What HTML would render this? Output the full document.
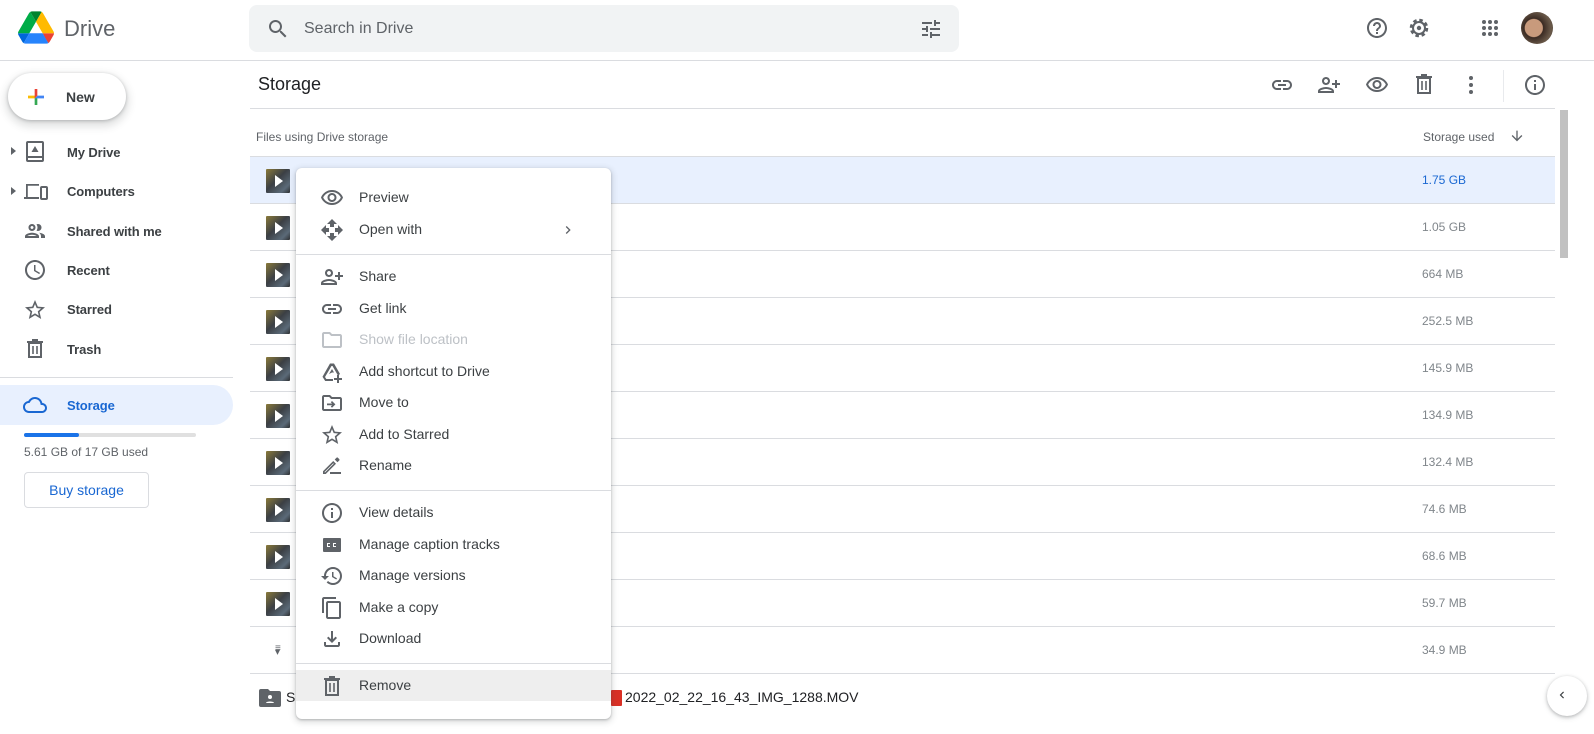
<!DOCTYPE html>
<html><head><meta charset="utf-8">
<style>
*{margin:0;padding:0;box-sizing:border-box}
body{width:1594px;height:734px;overflow:hidden;background:#fff;font-family:"Liberation Sans",Arial,sans-serif;color:#3c4043;position:relative}
.a{position:absolute}
svg{display:block}
.ic{position:absolute;fill:#5f6368}
.nav{position:absolute;left:67px;font-size:13px;color:#3c4043;font-weight:bold;letter-spacing:-0.1px}
.row{position:absolute;left:250px;width:1305px;height:47px;border-bottom:1px solid #dadce0}
.row .sz{position:absolute;left:1172px;top:16px;font-size:12px;color:#80868b}
.thumb{position:absolute;left:16px;top:12px;width:24px;height:24px;background:linear-gradient(135deg,#8a7a3a,#3b3f44 45%,#5b6a78 80%,#2d2f31);border-radius:1px}
.thumb:after{content:"";position:absolute;left:9px;top:6px;border-left:8px solid #fff;border-top:6px solid transparent;border-bottom:6px solid transparent}
.menu{position:absolute;left:296px;top:168px;width:315px;height:551px;background:#fff;border-radius:6px;box-shadow:0 2px 6px 2px rgba(60,64,67,.15),0 1px 2px rgba(60,64,67,.3)}
.mi{position:absolute;left:0;width:315px;height:31px;font-size:14px;color:#3c4043}
.mi span{position:absolute;left:63px;top:7px}
.mi svg{position:absolute;left:24px;top:4px;fill:#5f6368}
.sep{position:absolute;left:0;width:315px;height:1px;background:#dadce0}
</style></head><body>

<!-- header -->
<svg class="a" style="left:18px;top:11px" width="36" height="33" viewBox="0 0 87.3 78">
<path d="m6.6 66.85 3.85 6.65c.8 1.4 1.95 2.5 3.3 3.3l13.75-23.8h-27.5c0 1.55.4 3.1 1.2 4.5z" fill="#0066da"/>
<path d="m43.65 25-13.75-23.8c-1.35.8-2.5 1.9-3.3 3.3l-25.4 44a9.06 9.06 0 0 0-1.2 4.5h27.5z" fill="#00ac47"/>
<path d="m73.55 76.8c1.35-.8 2.5-1.9 3.3-3.3l1.6-2.75 7.65-13.25c.8-1.4 1.2-2.95 1.2-4.5h-27.502l5.852 11.5z" fill="#ea4335"/>
<path d="m43.65 25 13.75-23.8c-1.35-.8-2.9-1.2-4.5-1.2h-18.5c-1.6 0-3.15.45-4.5 1.2z" fill="#00832d"/>
<path d="m59.8 53h-32.3l-13.75 23.8c1.35.8 2.9 1.2 4.5 1.2h50.8c1.6 0 3.15-.45 4.5-1.2z" fill="#2684fc"/>
<path d="m73.4 26.5-12.7-22c-.8-1.4-1.95-2.5-3.3-3.3l-13.75 23.8 16.15 28h27.45c0-1.55-.4-3.1-1.2-4.5z" fill="#ffba00"/>
</svg>
<div class="a" style="left:64px;top:16px;font-size:22px;color:#5f6368">Drive</div>
<div class="a" style="left:249px;top:5px;width:710px;height:47px;background:#f1f3f4;border-radius:8px"></div>
<svg class="ic" style="left:266px;top:17px" width="24" height="24" viewBox="0 0 24 24"><path d="M15.5 14h-.79l-.28-.27C15.41 12.59 16 11.11 16 9.5 16 5.91 13.09 3 9.5 3S3 5.91 3 9.5 5.91 16 9.5 16c1.61 0 3.09-.59 4.23-1.57l.27.28v.79l5 4.99L20.49 19l-4.99-5zm-6 0C7.01 14 5 11.99 5 9.5S7.01 5 9.5 5 14 7.01 14 9.5 11.99 14 9.5 14z"/></svg>
<div class="a" style="left:304px;top:20px;font-size:16px;color:#5f6368">Search in Drive</div>
<svg class="ic" style="left:919px;top:17px" width="24" height="24" viewBox="0 0 24 24"><path d="M3 17v2h6v-2H3zM3 5v2h10V5H3zm10 16v-2h8v-2h-8v-2h-2v6h2zM7 9v2H3v2h4v2h2V9H7zm14 4v-2H11v2h10zm-6-4h2V7h4V5h-4V3h-2v6z"/></svg>
<svg class="ic" style="left:1365px;top:16px" width="24" height="24" viewBox="0 0 24 24"><path d="M11 18h2v-2h-2v2zm1-16C6.480 2 2 6.48 2 12s4.48 10 10 10 10-4.48 10-10S17.52 2 12 2zm0 18c-4.41 0-8-3.590-8-8s3.59-8 8-8 8 3.59 8 8-3.59 8-8 8zm0-14c-2.21 0-4 1.79-4 4h2c0-1.1.9-2 2-2s2 .9 2 2c0 2-3 1.75-3 5h2c0-2.25 3-2.5 3-5 0-2.21-1.79-4-4-4z"/></svg>
<svg class="a" style="left:1407px;top:16px" width="24" height="24" viewBox="0 0 24 24"><circle cx="12" cy="12" r="7.5" fill="none" stroke="#5f6368" stroke-width="3.5" stroke-dasharray="3.3 2.6"/><circle cx="12" cy="12" r="6" fill="none" stroke="#5f6368" stroke-width="2"/><circle cx="12" cy="12" r="2.2" fill="#5f6368"/></svg>
<svg class="a" style="left:1480px;top:18px" width="20" height="20" viewBox="0 0 20 20" fill="#5f6368"><circle cx="4" cy="4" r="2"/><circle cx="10" cy="4" r="2"/><circle cx="16" cy="4" r="2"/><circle cx="4" cy="10" r="2"/><circle cx="10" cy="10" r="2"/><circle cx="16" cy="10" r="2"/><circle cx="4" cy="16" r="2"/><circle cx="10" cy="16" r="2"/><circle cx="16" cy="16" r="2"/></svg>
<div class="a" style="left:1521px;top:12px;width:32px;height:32px;border-radius:50%;background:radial-gradient(circle at 40% 50%,#c89a7c 0 35%,#3a2a22 38%,#6b5a4a 70%,#2a2a2a)"></div>
<div class="a" style="left:0;top:60px;width:1594px;height:1px;background:#dadce0"></div>

<!-- sidebar -->
<div class="a" style="left:8px;top:73px;width:118px;height:47px;border-radius:24px;background:#fff;box-shadow:0 1px 3px rgba(60,64,67,.3),0 4px 8px 3px rgba(60,64,67,.15)"></div>
<svg class="a" style="left:24px;top:85px" width="24" height="24" viewBox="0 0 36 36"><path fill="#34A853" d="M16 16v14h4V20z"/><path fill="#4285F4" d="M30 16H20l-4 4h14z"/><path fill="#FBBC05" d="M6 16v4h10l4-4z"/><path fill="#EA4335" d="M20 16V6h-4v14z"/></svg>
<div class="a" style="left:66px;top:89px;font-size:14px;color:#3c4043;font-weight:bold">New</div>

<div class="a" style="left:11px;top:147px;border-left:5px solid #5f6368;border-top:4px solid transparent;border-bottom:4px solid transparent"></div>
<svg class="a" style="left:25px;top:141px" width="20" height="21" viewBox="0 0 20 21"><rect x="2" y="1" width="16" height="19" rx="1" fill="none" stroke="#5f6368" stroke-width="2"/><path d="M2 16h16" stroke="#5f6368" stroke-width="2"/><path d="M10 5l3.5 6h-7z" fill="#5f6368"/></svg>
<div class="nav" style="top:145px">My Drive</div>
<div class="a" style="left:11px;top:187px;border-left:5px solid #5f6368;border-top:4px solid transparent;border-bottom:4px solid transparent"></div>
<svg class="a" style="left:23px;top:182px" width="26" height="18" viewBox="0 0 26 18"><path d="M3 2h13v1.8H4.8V15H3z M1 15h15v2H1z" fill="#5f6368"/><rect x="18" y="5" width="6" height="12" rx="1" fill="none" stroke="#5f6368" stroke-width="2"/></svg>
<div class="nav" style="top:184px">Computers</div>
<svg class="ic" style="left:23px;top:219px" width="24" height="24" viewBox="0 0 24 24"><path d="M9 13.75c-2.34 0-7 1.17-7 3.5V19h14v-1.75c0-2.33-4.66-3.5-7-3.5zM4.34 17c.84-.58 2.87-1.25 4.66-1.25s3.82.67 4.66 1.25H4.34zM9 12c1.93 0 3.5-1.57 3.5-3.5S10.93 5 9 5 5.5 6.57 5.5 8.5 7.07 12 9 12zm0-5c.83 0 1.5.67 1.5 1.5S9.83 10 9 10s-1.5-.67-1.5-1.5S8.17 7 9 7zm7.04 6.81c1.16.84 1.96 1.96 1.96 3.44V19h4v-1.75c0-2.02-3.5-3.17-5.96-3.44zM15 12c1.93 0 3.5-1.57 3.5-3.5S16.93 5 15 5c-.54 0-1.04.13-1.5.35.63.89 1 1.98 1 3.15s-.37 2.26-1 3.15c.46.22.96.35 1.5.35z"/></svg>
<div class="nav" style="top:224px">Shared with me</div>
<svg class="ic" style="left:23px;top:258px" width="24" height="24" viewBox="0 0 24 24"><path d="M11.99 2C6.47 2 2 6.48 2 12s4.47 10 9.99 10C17.52 22 22 17.52 22 12S17.52 2 11.99 2zM12 20c-4.42 0-8-3.58-8-8s3.58-8 8-8 8 3.58 8 8-3.58 8-8 8zm.5-13H11v6l5.25 3.15.75-1.23-4.5-2.67z"/></svg>
<div class="nav" style="top:263px">Recent</div>
<svg class="ic" style="left:23px;top:298px" width="24" height="24" viewBox="0 0 24 24"><path d="M22 9.24l-7.19-.62L12 2 9.19 8.63 2 9.24l5.46 4.73L5.82 21 12 17.27 18.18 21l-1.63-7.030L22 9.24zM12 15.4l-3.76 2.27 1-4.28-3.32-2.88 4.38-.38L12 6.1l1.71 4.04 4.38.38-3.32 2.88 1 4.28L12 15.4z"/></svg>
<div class="nav" style="top:302px">Starred</div>
<svg class="a" style="left:26px;top:339px" width="18" height="19" viewBox="0 0 18 19"><path d="M1 3h16M6 1h6" stroke="#5f6368" stroke-width="2"/><rect x="3" y="4" width="12" height="14" fill="none" stroke="#5f6368" stroke-width="2"/><path d="M7 7v8M11 7v8" stroke="#5f6368" stroke-width="1.6"/></svg>
<div class="nav" style="top:342px">Trash</div>
<div class="a" style="left:0;top:377px;width:233px;height:1px;background:#dadce0"></div>
<div class="a" style="left:0;top:385px;width:233px;height:40px;background:#e8f0fe;border-radius:0 20px 20px 0"></div>
<svg class="a" style="left:23px;top:393px;fill:#1967d2" width="24" height="24" viewBox="0 0 24 24"><path d="M12 6c2.62 0 4.88 1.86 5.39 4.43l.3 1.5 1.53.11c1.56.1 2.78 1.41 2.78 2.96 0 1.65-1.35 3-3 3H6c-2.21 0-4-1.79-4-4 0-2.05 1.53-3.76 3.56-3.97l1.07-.11.5-.95C8.08 7.14 9.94 6 12 6m0-2C9.11 4 6.6 5.64 5.35 8.04 2.34 8.36 0 10.91 0 14c0 3.31 2.69 6 6 6h13c2.76 0 5-2.24 5-5 0-2.640-2.05-4.78-4.65-4.96C18.670 6.59 15.64 4 12 4z"/></svg>
<div class="nav" style="top:398px;color:#1967d2">Storage</div>
<div class="a" style="left:24px;top:433px;width:172px;height:4px;background:#e0e0e0;border-radius:2px"></div>
<div class="a" style="left:24px;top:433px;width:55px;height:4px;background:#1a73e8;border-radius:2px"></div>
<div class="a" style="left:24px;top:445px;font-size:12px;color:#5f6368">5.61 GB of 17 GB used</div>
<div class="a" style="left:24px;top:472px;width:125px;height:36px;border:1px solid #dadce0;border-radius:4px;font-size:14px;color:#1967d2;text-align:center;line-height:34px">Buy storage</div>

<!-- content header -->
<div class="a" style="left:258px;top:74px;font-size:18px;color:#202124">Storage</div>
<svg class="ic" style="left:1270px;top:73px" width="24" height="24" viewBox="0 0 24 24"><path d="M17 7h-4v2h4c1.65 0 3 1.35 3 3s-1.35 3-3 3h-4v2h4c2.76 0 5-2.24 5-5s-2.24-5-5-5zm-6 8H7c-1.65 0-3-1.35-3-3s1.35-3 3-3h4V7H7c-2.76 0-5 2.24-5 5s2.24 5 5 5h4v-2zm-3-4h8v2H8z"/></svg>
<svg class="ic" style="left:1317px;top:73px;transform:scaleX(-1)" width="24" height="24" viewBox="0 0 24 24"><path d="M15 12c2.21 0 4-1.79 4-4s-1.79-4-4-4-4 1.79-4 4 1.79 4 4 4zm0-6c1.1 0 2 .9 2 2s-.9 2-2 2-2-.9-2-2 .9-2 2-2zm0 8c-2.67 0-8 1.34-8 4v2h16v-2c0-2.66-5.33-4-8-4zm-6 4c.22-.72 3.31-2 6-2 2.7 0 5.8 1.29 6 2H9zm-3-3v-3h3v-2H6V7H4v3H1v2h3v3z"/></svg>
<svg class="ic" style="left:1365px;top:73px" width="24" height="24" viewBox="0 0 24 24"><path d="M12 6c3.79 0 7.17 2.13 8.82 5.5C19.17 14.87 15.79 17 12 17s-7.170-2.13-8.82-5.5C4.83 8.13 8.21 6 12 6m0-2C7 4 2.73 7.11 1 11.5 2.73 15.89 7 19 12 19s9.27-3.11 11-7.5C21.27 7.11 17 4 12 4zm0 5c1.38 0 2.5 1.12 2.5 2.5S13.38 14 12 14s-2.5-1.12-2.5-2.5S10.62 9 12 9m0-2c-2.48 0-4.5 2.02-4.5 4.5S9.52 16 12 16s4.5-2.02 4.5-4.5S14.48 7 12 7z"/></svg>
<svg class="a" style="left:1415px;top:74px" width="18" height="20" viewBox="0 0 18 20"><path d="M1 3h16M6 1h6" stroke="#5f6368" stroke-width="2"/><rect x="3" y="4" width="12" height="15" fill="none" stroke="#5f6368" stroke-width="2"/><path d="M7 7v9M11 7v9" stroke="#5f6368" stroke-width="1.6"/></svg>
<svg class="a" style="left:1465px;top:75px" width="12" height="20" viewBox="0 0 12 20" fill="#5f6368"><circle cx="6" cy="3" r="2"/><circle cx="6" cy="10" r="2"/><circle cx="6" cy="17" r="2"/></svg>
<div class="a" style="left:1503px;top:70px;width:1px;height:32px;background:#e8eaed"></div>
<svg class="ic" style="left:1523px;top:73px" width="24" height="24" viewBox="0 0 24 24"><path d="M11 7h2v2h-2zm0 4h2v6h-2zm1-9C6.48 2 2 6.48 2 12s4.48 10 10 10 10-4.48 10-10S17.52 2 12 2zm0 18c-4.41 0-8-3.59-8-8s3.59-8 8-8 8 3.59 8 8-3.59 8-8 8z"/></svg>
<div class="a" style="left:250px;top:108px;width:1305px;height:1px;background:#dadce0"></div>
<div class="a" style="left:256px;top:130px;font-size:12px;color:#5f6368">Files using Drive storage</div>
<div class="a" style="left:1423px;top:130px;font-size:12px;color:#5f6368">Storage used</div>
<svg class="ic" style="left:1509px;top:128px" width="16" height="16" viewBox="0 0 24 24"><path d="M20 12l-1.41-1.41L13 16.17V4h-2v12.17l-5.58-5.59L4 12l8 8 8-8z"/></svg>
<div class="a" style="left:250px;top:156px;width:1305px;height:1px;background:#dadce0"></div>

<!-- scrollbar -->
<div class="a" style="left:1560px;top:110px;width:8px;height:148px;background:#c1c1c1"></div>

<!-- rows -->
<div class="row" style="top:157px;background:#e8f0fe"><div class="thumb"></div><div class="sz" style="color:#1967d2">1.75 GB</div></div>
<div class="row" style="top:204px"><div class="thumb"></div><div class="sz">1.05 GB</div></div>
<div class="row" style="top:251px"><div class="thumb"></div><div class="sz">664 MB</div></div>
<div class="row" style="top:298px"><div class="thumb"></div><div class="sz">252.5 MB</div></div>
<div class="row" style="top:345px"><div class="thumb"></div><div class="sz">145.9 MB</div></div>
<div class="row" style="top:392px"><div class="thumb"></div><div class="sz">134.9 MB</div></div>
<div class="row" style="top:439px"><div class="thumb"></div><div class="sz">132.4 MB</div></div>
<div class="row" style="top:486px"><div class="thumb"></div><div class="sz">74.6 MB</div></div>
<div class="row" style="top:533px"><div class="thumb"></div><div class="sz">68.6 MB</div></div>
<div class="row" style="top:580px"><div class="thumb"></div><div class="sz">59.7 MB</div></div>
<div class="row" style="top:627px"><div class="a" style="left:25px;top:20px;font-size:10px;color:#5f6368;line-height:4px">≡<br>▾</div><div class="sz">34.9 MB</div></div>

<!-- bottom bar -->
<svg class="a" style="left:259px;top:689px" width="22" height="18" viewBox="0 0 22 18"><path d="M2 0h7l2 2h9a2 2 0 0 1 2 2v12a2 2 0 0 1-2 2H2a2 2 0 0 1-2-2V2a2 2 0 0 1 2-2z" fill="#5f6368"/><circle cx="11" cy="8" r="2" fill="#fff"/><path d="M7 14c0-2 8-2 8 0z" fill="#fff"/></svg>
<div class="a" style="left:286px;top:689px;font-size:14px;color:#202124">Sa</div>
<div class="a" style="left:611px;top:690px;width:11px;height:16px;background:#d93025;border-radius:1px"></div>
<div class="a" style="left:625px;top:689px;font-size:14px;color:#202124">2022_02_22_16_43_IMG_1288.MOV</div>
<div class="a" style="left:1547px;top:676px;width:40px;height:40px;border-radius:50%;background:#fff;box-shadow:0 1px 3px rgba(60,64,67,.3),0 2px 6px rgba(60,64,67,.15)"></div>
<svg class="a" style="left:1555px;top:688px" width="14" height="14" viewBox="0 0 24 24"><path d="M15.41 7.41L14 6l-6 6 6 6 1.41-1.41L10.83 12z" fill="#3c4043"/></svg>

<!-- context menu -->
<div class="menu">
 <div class="mi" style="top:14px"><svg width="24" height="24" viewBox="0 0 24 24"><path d="M12 6c3.79 0 7.17 2.13 8.82 5.5C19.17 14.87 15.79 17 12 17s-7.17-2.13-8.82-5.5C4.83 8.13 8.21 6 12 6m0-2C7 4 2.73 7.11 1 11.5 2.73 15.89 7 19 12 19s9.27-3.11 11-7.5C21.27 7.11 17 4 12 4zm0 5c1.38 0 2.5 1.12 2.5 2.5S13.38 14 12 14s-2.5-1.12-2.5-2.5S10.62 9 12 9m0-2c-2.48 0-4.5 2.02-4.5 4.5S9.52 16 12 16s4.5-2.02 4.5-4.5S14.48 7 12 7z"/></svg><span>Preview</span></div>
 <div class="mi" style="top:46px"><svg width="24" height="24" viewBox="0 0 24 24"><path d="M10 9h4V6h3l-5-5-5 5h3v3zm-1 1H6V7l-5 5 5 5v-3h3v-4zm14 2l-5-5v3h-3v4h3v3l5-5zm-9 3h-4v3H7l5 5 5-5h-3v-3z"/></svg><span>Open with</span><svg style="left:264px;top:8px" width="16" height="16" viewBox="0 0 24 24"><path d="M10 6L8.59 7.41 13.17 12l-4.58 4.59L10 18l6-6z"/></svg></div>
 <div class="sep" style="top:86px"></div>
 <div class="mi" style="top:93px"><svg style="transform:scaleX(-1)" width="24" height="24" viewBox="0 0 24 24"><path d="M15 12c2.21 0 4-1.79 4-4s-1.79-4-4-4-4 1.79-4 4 1.79 4 4 4zm0-6c1.1 0 2 .9 2 2s-.9 2-2 2-2-.9-2-2 .9-2 2-2zm0 8c-2.67 0-8 1.34-8 4v2h16v-2c0-2.66-5.33-4-8-4zm-6 4c.22-.72 3.31-2 6-2 2.7 0 5.8 1.29 6 2H9zm-3-3v-3h3v-2H6V7H4v3H1v2h3v3z"/></svg><span>Share</span></div>
 <div class="mi" style="top:125px"><svg width="24" height="24" viewBox="0 0 24 24"><path d="M17 7h-4v2h4c1.65 0 3 1.35 3 3s-1.35 3-3 3h-4v2h4c2.76 0 5-2.24 5-5s-2.24-5-5-5zm-6 8H7c-1.65 0-3-1.35-3-3s1.35-3 3-3h4V7H7c-2.76 0-5 2.24-5 5s2.24 5 5 5h4v-2zm-3-4h8v2H8z"/></svg><span>Get link</span></div>
 <div class="mi" style="top:156px;color:#bdc1c6"><svg style="fill:#bdc1c6" width="24" height="24" viewBox="0 0 24 24"><path d="M9.17 6l2 2H20v10H4V6h5.17M10 4H4c-1.1 0-1.99.9-1.99 2L2 18c0 1.1.9 2 2 2h16c1.1 0 2-.9 2-2V8c0-1.1-.9-2-2-2h-8l-2-2z"/></svg><span>Show file location</span></div>
 <div class="mi" style="top:188px"><svg width="24" height="24" viewBox="0 0 24 24"><path d="M10 3.5h4l6 10.5-2 1.6L12.5 6h-1L5 17l1.3 2H13v2H5.2L2.5 16.8z" /><path d="M17 15h2v3h3v2h-3v3h-2v-3h-3v-2h3z"/><path d="M9 14l3-5 2 3.5h-2z"/></svg><span>Add shortcut to Drive</span></div>
 <div class="mi" style="top:219px"><svg width="24" height="24" viewBox="0 0 24 24"><path d="M9.17 6l2 2H20v10H4V6h5.17M10 4H4c-1.1 0-1.99.9-1.99 2L2 18c0 1.1.9 2 2 2h16c1.1 0 2-.9 2-2V8c0-1.1-.9-2-2-2h-8l-2-2z"/><path d="M12 10l-1.2 1.2 1.3 1.3H7v1.7h5.1l-1.3 1.3L12 16.7l3.4-3.35z"/></svg><span>Move to</span></div>
 <div class="mi" style="top:251px"><svg width="24" height="24" viewBox="0 0 24 24"><path d="M22 9.24l-7.19-.62L12 2 9.19 8.63 2 9.24l5.46 4.73L5.82 21 12 17.27 18.18 21l-1.63-7.03L22 9.24zM12 15.4l-3.76 2.27 1-4.28-3.32-2.88 4.38-.38L12 6.1l1.71 4.04 4.38.38-3.32 2.88 1 4.28L12 15.4z"/></svg><span>Add to Starred</span></div>
 <div class="mi" style="top:282px"><svg width="24" height="24" viewBox="0 0 24 24"><path d="M3 17.25V20h2.75L16 9.75 13.25 7zM14.7 5.55l2.75 2.75 1.8-1.8a1 1 0 0 0 0-1.4l-1.35-1.35a1 1 0 0 0-1.4 0zM5 18.5l-.5-.5L13.25 9.3l.5.5z"/><path d="M10 18h11v2H10z"/></svg><span>Rename</span></div>
 <div class="sep" style="top:322px"></div>
 <div class="mi" style="top:329px"><svg width="24" height="24" viewBox="0 0 24 24"><path d="M11 7h2v2h-2zm0 4h2v6h-2zm1-9C6.48 2 2 6.48 2 12s4.48 10 10 10 10-4.48 10-10S17.52 2 12 2zm0 18c-4.41 0-8-3.59-8-8s3.59-8 8-8 8 3.59 8 8-3.59 8-8 8z"/></svg><span>View details</span></div>
 <div class="mi" style="top:361px"><svg width="24" height="24" viewBox="0 0 24 24"><path d="M4 5h16a1 1 0 0 1 1 1v12a1 1 0 0 1-1 1H4a1 1 0 0 1-1-1V6a1 1 0 0 1 1-1zm3 5v4h3v-1H8v-2h2v-1zm6 0v4h3v-1h-2v-2h2v-1z"/></svg><span>Manage caption tracks</span></div>
 <div class="mi" style="top:392px"><svg width="24" height="24" viewBox="0 0 24 24"><path d="M13 3c-4.97 0-9 4.03-9 9H1l3.89 3.89.07.14L9 12H6c0-3.87 3.13-7 7-7s7 3.13 7 7-3.13 7-7 7c-1.93 0-3.68-.79-4.94-2.06l-1.42 1.42C8.27 19.99 10.51 21 13 21c4.97 0 9-4.03 9-9s-4.03-9-9-9zm-1 5v5l4.28 2.54.72-1.21-3.5-2.08V8H12z"/></svg><span>Manage versions</span></div>
 <div class="mi" style="top:424px"><svg width="24" height="24" viewBox="0 0 24 24"><path d="M16 1H4c-1.1 0-2 .9-2 2v14h2V3h12V1zm3 4H8c-1.1 0-2 .9-2 2v14c0 1.1.9 2 2 2h11c1.1 0 2-.9 2-2V7c0-1.1-.9-2-2-2zm0 16H8V7h11v14z"/></svg><span>Make a copy</span></div>
 <div class="mi" style="top:455px"><svg width="24" height="24" viewBox="0 0 24 24"><path d="M18 15v3H6v-3H4v3c0 1.1.9 2 2 2h12c1.1 0 2-.9 2-2v-3h-2zm-1-4l-1.41-1.41L13 12.17V4h-2v8.17L8.41 9.59 7 11l5 5 5-5z"/></svg><span>Download</span></div>
 <div class="sep" style="top:495px"></div>
 <div class="mi" style="top:502px;background:#eeeeee"><svg style="left:27px;top:6px;fill:none" width="18" height="20" viewBox="0 0 18 20"><path d="M1 3h16M6 1h6" stroke="#5f6368" stroke-width="2"/><rect x="3" y="4" width="12" height="15" stroke="#5f6368" stroke-width="2"/><path d="M7 7v9M11 7v9" stroke="#5f6368" stroke-width="1.6"/></svg><span>Remove</span></div>
</div>
</body></html>
